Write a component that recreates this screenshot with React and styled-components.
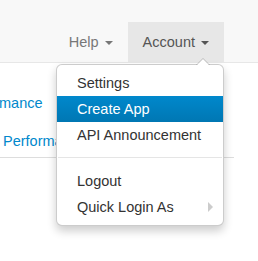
import styled, { createGlobalStyle } from 'styled-components';

const Global = createGlobalStyle`
    body {
        margin: 0;
        padding: 0;
        min-height: 100vh;
        background: #fff;
        font-family: "Liberation Sans", Arial, sans-serif;
        font-size: 14px;
        color: #333;
    }
`;

function Caret({ color }) {
    return (
        <CaretIcon width="8" height="4" viewBox="0 0 8 4">
            <path d="M0 0 L8 0 L4 4 Z" fill={color} />
        </CaretIcon>
    );
}

export default function App() {
    return (
        <>
            <Global />
            <Navbar>
                <Nav>
                    <NavItem>
                        <NavLink>
                            Help <Caret color="#777" />
                        </NavLink>
                    </NavItem>
                    <NavItem $open>
                        <NavLink $open>
                            Account <Caret color="#555" />
                        </NavLink>
                        <Menu>
                            <MenuItem>Settings</MenuItem>
                            <MenuItem $active>Create App</MenuItem>
                            <MenuItem>API Announcement</MenuItem>
                            <Divider />
                            <MenuItem>Logout</MenuItem>
                            <MenuItem $sub>Quick Login As</MenuItem>
                        </Menu>
                    </NavItem>
                </Nav>
            </Navbar>
            <Content>
                <Link $shift="-40.5px">Performance</Link>
                <Link $shift="3px">Performance</Link>
            </Content>
        </>
    );
}

const Navbar = styled.div`
    height: 62px;
    background: #f8f8f8;
    border-bottom: 1px solid #e7e7e7;
    display: flex;
    justify-content: flex-end;
    align-items: flex-end;
    padding-right: 34px;
    position: relative;
    z-index: 2;
`;

const Nav = styled.ul`
    display: flex;
    margin: 0;
    padding: 0;
    list-style: none;
`;

const NavItem = styled.li`
    position: relative;
`;

const NavLink = styled.a`
    display: flex;
    align-items: center;
    gap: 6px;
    height: 40px;
    padding: 0 15px;
    box-sizing: border-box;
    line-height: 20px;
    font-size: 14.5px;
    color: ${(p) => (p.$open ? '#555' : '#777')};
    background: ${(p) => (p.$open ? '#e7e7e7' : 'transparent')};
`;

const CaretIcon = styled.svg`
    display: block;
    margin-top: 1px;
`;

const Menu = styled.ul`
    position: absolute;
    top: calc(100% + 2px);
    right: 0;
    width: 168px;
    box-sizing: border-box;
    margin: 0;
    padding: 5px 0;
    list-style: none;
    background: #fff;
    border: 1px solid rgba(0, 0, 0, 0.2);
    border-radius: 6px;
    box-shadow: 0 5px 10px rgba(0, 0, 0, 0.2);

    &::before {
        content: '';
        position: absolute;
        top: -7px;
        right: 13px;
        border-left: 7px solid transparent;
        border-right: 7px solid transparent;
        border-bottom: 7px solid rgba(0, 0, 0, 0.2);
    }
    &::after {
        content: '';
        position: absolute;
        top: -6px;
        right: 14px;
        border-left: 6px solid transparent;
        border-right: 6px solid transparent;
        border-bottom: 6px solid #fff;
    }
`;

const MenuItem = styled.li`
    position: relative;
    padding: 3px 20px;
    line-height: 20px;
    font-size: 14.5px;
    white-space: nowrap;
    color: ${(p) => (p.$active ? '#fff' : '#333')};
    background: ${(p) => (p.$active ? 'linear-gradient(to bottom, #0088cc, #0077b3)' : 'transparent')};

    ${(p) =>
        p.$sub &&
        `
        &::after {
            content: '';
            position: absolute;
            right: 10px;
            top: 8px;
            border-top: 5px solid transparent;
            border-bottom: 5px solid transparent;
            border-left: 5px solid #ccc;
        }
    `}
`;

const Divider = styled.li`
    height: 1px;
    margin: 9px 1px;
    background: #e5e5e5;
    border-bottom: 1px solid #fff;
`;

const Content = styled.div`
    width: 234px;
    display: flex;
    flex-direction: column;
    gap: 18px;
    padding: 30px 0 6px;
    border-bottom: 1px solid #ddd;
    overflow: hidden;
`;

const Link = styled.span`
    display: block;
    margin-left: ${(p) => p.$shift};
    line-height: 20px;
    font-size: 14.5px;
    color: #0088cc;
    white-space: nowrap;
`;
